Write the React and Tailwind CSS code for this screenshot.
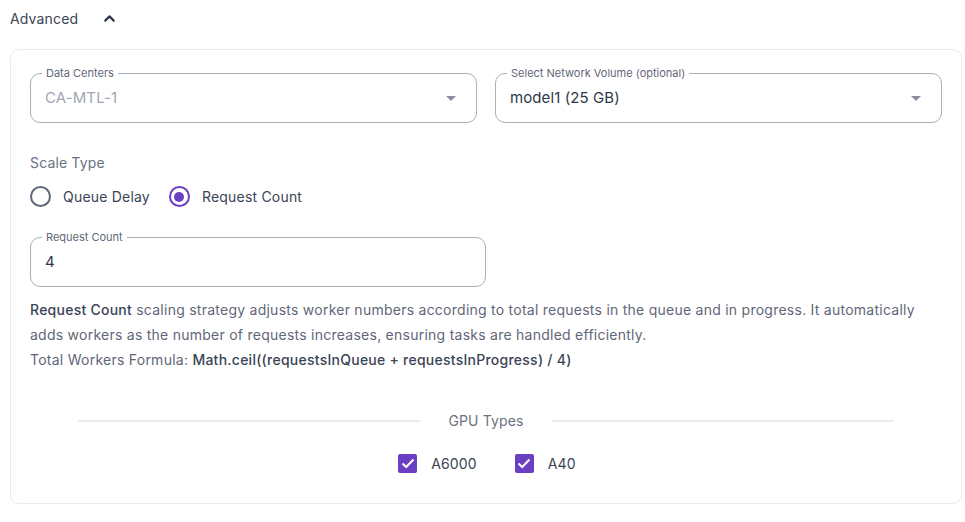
import { ChevronUp } from "lucide-react"

function OutlinedField({ label, value, muted, select, className }) {
  return (
    <div className={"relative flex items-center justify-between rounded-[10px] border border-[#a9b0bc] pl-[14px] pr-[20px] " + (className || "")}>
      <span className="absolute left-[11px] top-[-8px] bg-white px-[4px] text-[11px] leading-[14px] text-[#5f6778]">
        {label}
      </span>
      <span className={"text-[15px] tracking-[0.1px] " + (muted ? "text-[#a0a6b1]" : "text-[#2f3848]")}>{value}</span>
      {select && (
        <svg width="10" height="5" viewBox="0 0 10 5">
          <path d="M0 0 L10 0 L5 5 Z" fill="#8a909c" />
        </svg>
      )}
    </div>
  )
}

function Radio({ checked, label }) {
  return (
    <label className="flex items-center gap-[12px]">
      <span
        className={
          "flex h-[21px] w-[21px] items-center justify-center rounded-full border-2 " +
          (checked ? "border-[#6a3fc2]" : "border-[#5f6778]")
        }
      >
        {checked && <span className="h-[10px] w-[10px] rounded-full bg-[#6a3fc2]" />}
      </span>
      <span className="text-[14px] tracking-[0.2px] text-[#3a4456]">{label}</span>
    </label>
  )
}

function Checkbox({ label }) {
  return (
    <label className="flex items-center gap-[14px]">
      <span className="flex h-[19px] w-[19px] items-center justify-center rounded-[2px] bg-[#6a3fc2]">
        <svg width="14" height="11" viewBox="0 0 14 11">
          <path d="M1.5 5.5 L5.2 9 L12.5 1.5" fill="none" stroke="white" strokeWidth="2" />
        </svg>
      </span>
      <span className="text-[14px] tracking-[0.15px] text-[#3a4456]">{label}</span>
    </label>
  )
}

export default function App() {
  return (
    <div className="h-[522px] w-[965px] bg-white font-['Inter',sans-serif]">
      <div className="flex h-[36px] items-center gap-[23px] pl-[10px] pt-[1px]">
        <span className="text-[14px] tracking-[0.15px] text-[#3a4456]">Advanced</span>
        <ChevronUp className="h-[17px] w-[17px] text-[#2f3848]" strokeWidth={3} />
      </div>

      <div className="mx-[10px] mt-[13px] h-[455px] w-[952px] rounded-[9px] border border-[#ececef] px-[19px] pt-[23px]">
        <div className="flex gap-[18px]">
          <OutlinedField className="h-[50px] flex-1" label="Data Centers" value="CA-MTL-1" muted select />
          <OutlinedField className="h-[50px] flex-1" label="Select Network Volume (optional)" value="model1 (25 GB)" select />
        </div>

        <div className="mt-[30px] text-[14px] leading-[20px] tracking-[0.15px] text-[#6b7281]">Scale Type</div>
        <div className="mt-[13px] flex items-center gap-[19px]">
          <Radio label="Queue Delay" />
          <Radio checked label="Request Count" />
        </div>

        <OutlinedField className="mt-[30px] h-[50px] w-[456px]" label="Request Count" value="4" />

        <div className="mt-[10px] text-[14px] leading-[25px] tracking-[0.25px] text-[#5f6778]">
          <p>
            <span className="font-medium text-[#3a4456]">Request Count</span> scaling strategy adjusts worker
            numbers according to total requests in the queue and in progress. It automatically adds workers as the
            number of requests increases, ensuring tasks are handled efficiently.
          </p>
          <p>
            Total Workers Formula:{" "}
            <span className="font-medium text-[#3a4456]">Math.ceil((requestsInQueue + requestsInProgress) / 4)</span>
          </p>
        </div>

        <div className="mx-[48px] mt-[39px] flex items-center gap-[28px]">
          <div className="h-[2px] flex-1 bg-[#ebebf0]" />
          <span className="text-[14px] leading-[20px] tracking-[0.15px] text-[#6b7281]">GPU Types</span>
          <div className="h-[2px] flex-1 bg-[#ebebf0]" />
        </div>

        <div className="mt-[22px] flex justify-center gap-[38px] pl-[2px]">
          <Checkbox label="A6000" />
          <Checkbox label="A40" />
        </div>
      </div>
    </div>
  )
}
